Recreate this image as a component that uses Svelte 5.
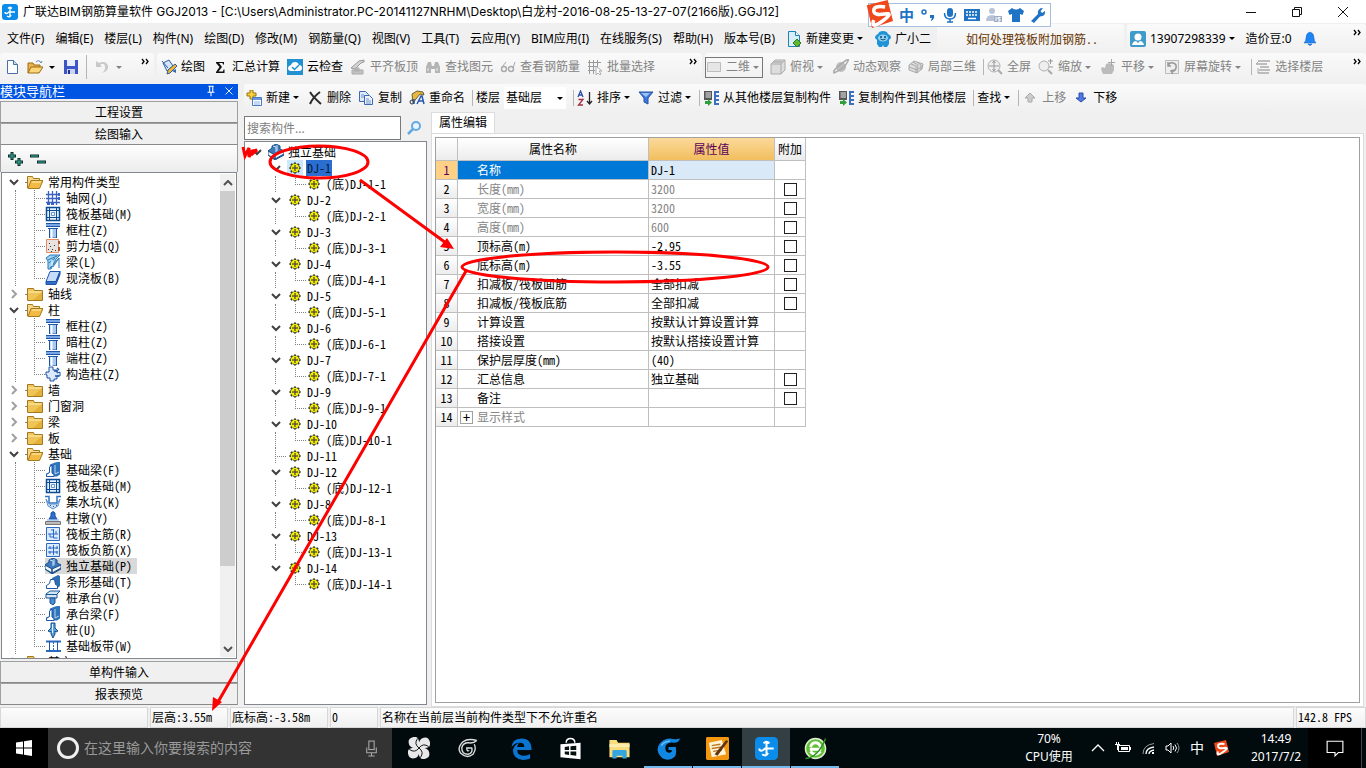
<script lang="ts">
type Item = { icon?: string; text?: string; off?: boolean; arrow?: boolean; sep?: boolean };
type Node = { text: string; open?: boolean; children?: [string, string][] };

const blue = "#1c54a8";
const col = `<path d="M1 1h14v3H1z" fill="#7ba7e6"/><path d="M1 1.500h14M1 4.500h14M3 6.500h10" stroke="${blue}"/><path d="M4.500 6.500h7V16h-7z" fill="#a9c9f5" stroke="${blue}"/><path d="M6.500 7v9" stroke="#fff" stroke-width="2"/>`;
const beam = `<path d="M1 14.500v-3l3-1 1-8 5-2 5-1v13l-3 2H1z" fill="#2f74ba"/><path d="M1.500 14.500v-2l3-2V5L7 3v8l2 1.500v2z" fill="#fff" stroke="${blue}"/><path d="M10 3v9l4-2" stroke="#b7d5f3" fill="none"/>`;
const copyTo = `<path d="M1 1h8v9H1z" fill="#555"/><path d="M2.500 3H8M2.500 5H8M2.500 7H8" stroke="#eee"/><path d="M2 11h3v-2l4 3.500L5 16v-2H2z" fill="#2f9e3c"/><path d="M11 1h5v2h-3v2h3v2h-3v2h3v2h-3v2h3v2h-5z" fill="#3c6fc0"/>`;

const icons: Record<string, string> = {
  app: `<rect width="16" height="16" rx="3" fill="#0b8ce9"/><path d="M8 3v9M3 8c0 2 2 2 4 0h6M6 4.500Q8 2 10 4.500M5 12q3 2 4-1" fill="none" stroke="#fff" stroke-width="1.400"/>`,
  new: `<path d="M3.500 1.500h6l4 4v9h-10z" fill="#fdfeff" stroke="#4a6ea5"/><path d="M9.500 1.500v4h4" fill="#c5d9f1" stroke="#4a6ea5"/>`,
  open: `<path d="M1 14V4h5l1 2h6v3" fill="#e9b44b" stroke="#9c6b14"/><path d="M1 14l3-6h12l-4 6z" fill="#fbd678" stroke="#9c6b14"/><path d="M9 3q3-3 5 1l1-2" fill="none" stroke="#5b82b8"/>`,
  save: `<path d="M1 1h14v14H1z" fill="#3d56c5"/><path d="M4 1h8v6H4z" fill="#e8eefc"/><path d="M4 10h8v5H4z" fill="#ccd5ef"/><path d="M5 11h2v4H5z" fill="#22348f"/>`,
  undo: `<path d="M2 2v6h6L6 6q4-3 5 1t-3 7q7-2 6-7-2-6-9-3z" fill="#c8c8c8"/>`,
  paint: `<path d="M2 4l6-3 4 6-6 5z" fill="#d5e4f6" stroke="#2d5f9e"/><path d="M1 2l6 7" stroke="#2d5f9e"/><path d="M6 15l1-4 7-6 2 2-7 7z" fill="#f3b62f" stroke="#31609c"/><path d="M11 12l4-2v4z" fill="#346bb0"/>`,
  sum: `<path d="M4 3h8v2.500h-1L10.500 4H7l3 4-3.500 4.500H11l.5-2h1V14H4v-1l3.500-5L4 4z" fill="#111"/>`,
  cloud: `<path d="M0 0h16v16H0z" fill="#2291d1"/><path d="M4 12q-3 0-3-3 0-2 3-3 1-3 4-3t4 3q3 0 3 3t-3 3z" fill="#fff"/><path d="M5 8l2.500 2.500L12 6" fill="none" stroke="#2291d1" stroke-width="1.500"/>`,
  align: `<path d="M1 9l8-7 5-1v2l-3 1-6 6z" fill="#d4d4d4" stroke="#999"/><path d="M2 11h11v4H2zM5 9h4v3H5z" fill="#c2c2c2" stroke="#aaa"/>`,
  find: `<path d="M1 14V8l2-5h3l1 4h2l1-4h3l2 5v6h-5v-4H6v4z" fill="#b4b4b4"/><path d="M3 9v3M12 9v3" stroke="#eee"/>`,
  glasses: `<circle cx="4" cy="10" r="2.500" fill="none" stroke="#aaa" stroke-width="1.500"/><circle cx="11" cy="10" r="2.500" fill="none" stroke="#aaa" stroke-width="1.500"/><path d="M2 8l4-5M13 9l2-6" fill="none" stroke="#aaa"/>`,
  batch: `<path d="M2.500 1v14M6.500 1v14M10.500 1v7M1 3.500h13M1 7.500h9M1 11.500h7" stroke="#999"/><path d="M9 7v9l2-2 2 2 1-1-2-3h3z" fill="#fff" stroke="#aaa"/>`,
  flat: `<path d="M1.500 3.500h13v9h-13z" fill="#e6e6e6" stroke="#bdbdbd"/>`,
  cube: `<path d="M1 5l4-4h10v10l-4 4H1z" fill="#ddd" stroke="#aaa"/><path d="M1 5h10v10M11 5l4-4" fill="none" stroke="#aaa"/><path d="M4 2h9l-2 2H2z" fill="#bbb"/>`,
  orbit: `<circle cx="8" cy="8" r="5" fill="#bdbdbd"/><path d="M1 14Q-1 12 8 5T15 2t-4 6-10 6" fill="none" stroke="#aaa" stroke-width="1.500"/>`,
  part3d: `<path d="M1 6l5-4 9 3-1 5-5 4-8-3z" fill="#ddd" stroke="#aaa"/><path d="M1 8l8 3 6-4M5 3l5 3-1 8M3 5l5 2v7M9 3l4 3v5" fill="none" stroke="#aaa"/>`,
  full: `<circle cx="7" cy="7" r="6" fill="#eee" stroke="#b0b0b0"/><path d="M7 2v10M2 7h10M5.500 4L7 2l1.500 2M5.500 10L7 12l1.500-2" fill="none" stroke="#999"/><path d="M11 11l4 4" stroke="#aaa" stroke-width="2"/>`,
  zoom: `<circle cx="6" cy="7" r="5" fill="#eee" stroke="#b0b0b0"/><path d="M10 11l4 4" stroke="#aaa" stroke-width="2"/><path d="M10 2h5M12.500 0v5M11 8h4" stroke="#999"/>`,
  pan: `<path d="M2 15q-3-5-1-7l3 1 1-4q4-2 8 1v5l-2 4z" fill="#bbb"/><path d="M10.500 0v7M7 3.500h7" stroke="#a5a5a5"/>`,
  rotate: `<path d="M1.500 1.500h13v13h-13z" fill="#eee" stroke="#bbb"/><path d="M4 7q1-4 5-3t3 5-5 3M4 3v4h3M9 15l-2-3 3-1" fill="none" stroke="#999" stroke-width="1.500"/>`,
  floors: `<path d="M3 2h12M1 5h11M5 8h9M4 11h11M3 14h11" stroke="#aaa" stroke-width="1.500"/><path d="M1 5l3-3M3 9v5" stroke="#aaa"/>`,
  create: `<path d="M4 0h3v3h3v3H7v3H4V6H1V3h3z" fill="#f7d33c" stroke="#967211"/><path d="M6.500 7.500h9v8h-9z" fill="#fff" stroke="#4c78be"/><path d="M7 8h8v2H7z" fill="#6a98df"/><path d="M8 12h6M8 14h6" stroke="#8db0e3"/>`,
  del: `<path d="M3 2q3 5 11 12M13 2Q6 7 3 14" fill="none" stroke="#2b2b2b" stroke-width="2"/>`,
  copy: `<path d="M1.500 1.500h6l3 3v7h-9z" fill="#dfeafb" stroke="#3f68b4"/><path d="M6.500 5.500h5l3 3v6h-8z" fill="#eef4ff" stroke="#3f68b4"/><path d="M3 5h3M3 7h3M8 9h3M8 11h5M8 13h5" stroke="#6d93d0"/>`,
  rename: `<path d="M3 4l5-3 6 1 1 3-4-1-4 5-3 4z" fill="#e6b842" stroke="#6d6332"/><circle cx="3" cy="12" r="2" fill="none" stroke="#333"/><path d="M5 9v5M8 14l4-8h1l2 8M9 11h5" fill="none" stroke="#2458b0" stroke-width="1.500"/>`,
  sort: `<path d="M1 7l2.500-6L6 7M2 5h3" fill="none" stroke="#2d4ea5" stroke-width="1.300"/><path d="M1.500 9.500H6L1.500 15H6" fill="none" stroke="#a52d3e" stroke-width="1.300"/><path d="M12.500 2v11M10 11l2.500 3 2.500-3" fill="none" stroke="#222" stroke-width="1.300"/>`,
  filter: `<path d="M1 2h14L10 8v6l-4-2V8z" fill="#3e78da" stroke="#2452a5"/><path d="M3 3h9L8 7z" fill="#9cc1f7"/>`,
  copyfrom: copyTo,
  copyto: copyTo,
  up: `<path d="M8 3l5 5h-3v4H6V8H3z" fill="#ccc" stroke="#aaa"/>`,
  down: `<path d="M8 12L3 8h3V3h4v5h3z" fill="#4c7ae6" stroke="#2c4ba5"/>`,
  change: `<path d="M2.500.5h7l4 4v11h-11z" fill="#d8eefb" stroke="#2181b3"/><path d="M9.500.5v4h4" fill="#fff" stroke="#2181b3"/><path d="M11 8l4 4-4 4-4-4z" fill="#5fb830" stroke="#2d7c18"/>`,
  mascot: `<path d="M0 7q0-3 3-4 1-3 5-3t5 3q3 1 3 4l-2 2v4l-2 3H9l-1-2-1 2H4l-2-3V9z" fill="#2093d6"/><ellipse cx="8" cy="7" rx="5" ry="3.500" fill="#8fd4f5"/><circle cx="6" cy="6" r="1" fill="#124876"/><circle cx="10" cy="6" r="1" fill="#124876"/><path d="M5.500 8q2.500 2 5 0" fill="none" stroke="#124876"/>`,
  user: `<rect width="16" height="16" rx="2" fill="#3f9bcb"/><circle cx="8" cy="6" r="3.500" fill="#fff"/><path d="M2 14q1-4 4-4l2 2 2-2q3 0 4 4z" fill="#fff"/>`,
  bell: `<path d="M8 1q-4 1-4 6 0 3-2 5h12q-2-2-2-5 0-5-4-6zM6 13q2 3 4 0z" fill="#1f85f5" stroke="#1965bf" stroke-width=".5"/>`,
  search: `<circle cx="10" cy="6" r="4" fill="#e9f5ff" stroke="#66a9e0" stroke-width="2"/><path d="M7 9l-5 5" stroke="#66a9e0" stroke-width="2.500"/>`,
  folder: `<path d="M.5 14.500v-12h6l1 2h8v10z" fill="#f0c557" stroke="#a47a1e"/><path d="M1 6h14" stroke="#fff0b4"/><path d="M6 14l9-8v8z" fill="#e3b03a"/>`,
  folderopen: `<path d="M.5 14V2.500h5l1 2h6V7" fill="#f6d98c" stroke="#a47a1e"/><path d="M1 14.500l3-8h12l-3.500 8z" fill="#f3bb45" stroke="#a47a1e"/><path d="M5 8h9" stroke="#fff0b4"/>`,
  grid: `<path d="M3.500 1v14M7.500 1v14M11.500 1v14M1 4.500h14M1 8.500h14M1 12.500h14" stroke="#3b62c0" stroke-width="1.300"/><path d="M13 3h2v3h-2zM13 7h2v3h-2zM2 13h3v2H2zM6 13h3v2H6z" fill="#3b62c0"/>`,
  raft: `<path d="M1.500 1.500h13v13h-13z" fill="#e8f2ff" stroke="#0d4b91" stroke-width="1.500"/><path d="M4.500 1v14M11.500 1v14M1 4.500h14M1 11.500h14" stroke="#0d4b91"/><path d="M6.500 6.500h3v3h-3z" fill="#fff" stroke="#5c93d4"/>`,
  col,
  wall: `<path d="M1.500 1.500h12v13h-12z" fill="#e8e3df" stroke="#e88b60"/><path d="M3 11h1v1H3zM5 8h1v1H5zM7 11h1v1H7zM9 7h1v1H9zM10 12h1v1h-1zM4 5h1v1H4zM6 13h1v1H6z" fill="#333"/><path d="M14 3v3M14 9v4" stroke="#b65826" stroke-width="2"/>`,
  beamf: `<path d="M1 4l4-3h10l-4 4-5 10H3V7z" fill="#9fd0f0" stroke="#2779b8"/><path d="M3 6l9-4M5 14l9-10v10M8 13l6-9M4 9l6-5" fill="none" stroke="#2779b8"/><path d="M7 6v6" stroke="#fff"/>`,
  slab: `<path d="M5 1.500h10l-4 10H1z" fill="#c5dcfa" stroke="${blue}"/><path d="M1 11.500h10l4-10v3l-4 10H1z" fill="#346cc8" stroke="${blue}"/>`,
  ccol: `<path d="M4 1h4v3h4v3l3-1v4h-3v3H9v2H5v-3H2V9H1V6h3z" fill="#dce9fb" stroke="${blue}"/><path d="M9 5h4M10 10h4M12 2l2 2" stroke="${blue}" stroke-width="1.500"/>`,
  beam,
  pit: `<path d="M0 2.500h4V9h8V2.500h4" fill="none" stroke="#3175c5" stroke-width="1.500"/><path d="M1 5l2 7 5 3 5-3 2-7-3 5H4z" fill="#cfe2f7" stroke="#5991d2"/><path d="M5 11h1v1H5zM8 12h1v1H8zM11 11h1v1h-1z" fill="#235a9e"/>`,
  pier: `<path d="M6 3q2-3 4 0v3l2 3H4l2-3z" fill="#2f6fcb" stroke="${blue}"/><path d="M.5 11.500h15v3H.5z" fill="#bbb" stroke="#777"/><path d="M2 10h12" stroke="#75a5e0"/>`,
  rebar: `<path d="M1.500 1.500h13v13h-13z" fill="#dceafd" stroke="#2b69c3"/><path d="M3 8h10M8.500 3v9h4M5 8v3h3M6 4h2M11 5v3" fill="none" stroke="#2b69c3"/>`,
  rebarx: `<path d="M1.500 1.500h13v13h-13z" fill="#dceafd" stroke="#2b69c3"/><path d="M3 6h10M3 10h10M8.500 3v10M5 4v3M12 4v3M5 9v3M12 9v3" fill="none" stroke="#2b69c3"/>`,
  iso: `<path d="M0 7l4-3V2l4-2 4 2v3l4 2v4l-9 5-7-5z" fill="#3b78bc" stroke="#1b4d84"/><path d="M0 7l7 4v4l-7-4zM7 11l9-4v3l-9 5z" fill="#eef6ff" stroke="#1b4d84"/><path d="M5 2l3 1v5M9 1v6" fill="none" stroke="#cfe4fa"/>`,
  strip: `<path d="M7 4l6-3 2 1v10l-4 3z" fill="#2f6eb1"/><path d="M1.500 14.500v-3l3-2 1-4h4l1 5 2 1v3z" fill="#fff" stroke="${blue}"/>`,
  cap: `<path d="M1 4l4-3h10l-3 3v4H1z" fill="#d5e6fb" stroke="#1b5694"/><path d="M1 4.500h11M5 8h5v5l-2 2-3-2z" fill="#498bd3" stroke="#1b5694"/>`,
  pile: `<path d="M6 1h4v5l3 3-2 1-1-1v3l-2 4-2-4V9l-1 1-2-1 3-3z" fill="#5aa0e0" stroke="#164d87"/><path d="M7.500 2v9" stroke="#e4f2ff"/>`,
  band: `<path d="M1 3.500h15M1 13h15" stroke="#2b69c3" stroke-width="2"/><path d="M4.500 3v10M12.500 3v10" stroke="${blue}"/><path d="M8.500 4v8" stroke="#2b69c3" stroke-dasharray="2 1"/>`,
  gear: `<path d="M8 2.500v11M2.500 8h11M4 4l8 8M12 4l-8 8" stroke="#222" stroke-width="2"/><circle cx="8" cy="8" r="4.500" fill="#f4ee00" stroke="#333" stroke-dasharray="1.500 1"/><path d="M8 5v1M8 10v1M5 8h1M10 8h1" stroke="#222"/><path d="M7 7h2v2H7z" fill="#fff" stroke="#222"/>`,
  plusplus: `<path d="M5 1v8M1 5h8M12 7v8M8 11h8" stroke="#0a2f2b" stroke-width="3"/><path d="M5 2v6M2 5h6M12 8v6M9 11h6" stroke="#35b4a0"/>`,
  minusminus: `<path d="M0 5h9M7 11h9" stroke="#0a2f2b" stroke-width="3"/><path d="M1 5h7M8 11h7" stroke="#35b4a0"/>`,
  sogou: `<path d="M1 3l12-3 3 12-12 4z" fill="#f0481a"/><path d="M11.500 4Q5 3 5 6t6 2-1 4-5-.5" fill="none" stroke="#fff" stroke-width="2"/>`,
  comma: `<circle cx="4" cy="5" r="2" fill="none" stroke="#1e73c5" stroke-width="1.500"/><path d="M10 8h4q1 4-3 6v-1l1-2h-2z" fill="#1e73c5"/>`,
  mic: `<rect x="5" y="1" width="6" height="9" rx="3" fill="#1e73c5"/><path d="M2.500 6q0 6 5.500 6t5.500-6M8 12v3M5 15h6" fill="none" stroke="#1e73c5" stroke-width="1.500"/>`,
  keys: `<path d="M0 2h16v12H0z" fill="#1e73c5"/><path d="M2 5h12M2 8h12" stroke="#fff" stroke-width="1.500" stroke-dasharray="2 1"/><path d="M4 11.500h8" stroke="#fff" stroke-width="1.500"/>`,
  person: `<circle cx="6" cy="4" r="3" fill="#b7c3d6"/><path d="M0 14q0-6 6-6t5 6z" fill="#b7c3d6"/><path d="M8 9h8v6H8z" fill="#9dadc5"/><path d="M10 10v4M14.500 10.500H12v1.500h2v2h-2" fill="none" stroke="#fff"/>`,
  shirt: `<path d="M0 4l4-3q4 3 8 0l4 3-1.500 4L12 7v8H4V7L1.500 8z" fill="#1e73c5"/>`,
  wrench: `<path d="M1 14l7-7q-1-4 3-6l2 .5L10.500 4 12 6l3-2q1 5-5 5.500L4 16z" fill="#1e73c5"/>`,
  fan: `<g fill="#e8e8e8"><path d="M8 8Q3 9 1 6-1 1 4 0t4 8z"/><path d="M8 8Q7 3 10 1q5-2 6 3T8 8z"/><path d="M8 8q5-1 7 2 2 5-3 6T8 8z"/><path d="M8 8q1 5-2 7-5 2-6-3t8-4z"/><circle cx="8" cy="8" r="4"/></g><path d="M8 8Q4 5 7 1M8 8q3-4 7-1M8 8q4 3 1 7M8 8q-3 4-7 1" fill="none" stroke="#0a1215" stroke-width=".7"/>`,
  swirl: `<path d="M15 2q-2 2-5 2-6-1-7 4 0 5 5 5 4-1 3-5H7q0 3 2 2M15 2q-7-2-11 1-5 5-2 9 5 5 10 1 3-4 1-8" fill="none" stroke="#ddd" stroke-width="1.100"/>`,
  edge: `<path d="M1 8Q1 1 8 1t7 8H5q0 4 5 4 2 0 4-1v3q-2 1-5 1-7-1-7-7 1-4 5-5-2 1-2 3h5q0-3-3-3-4 0-6 3z" fill="#0b76d1"/>`,
  store: `<path d="M1 5l14-1v11.500L1 14z" fill="#fff"/><path d="M5 4q0-3 3-3t3 3" fill="none" stroke="#fff"/><path d="M4 7l3-.5V9H4zM8 6.500l4-.5v3H8zM4 10h3v2.500L4 12zM8 10h4v3l-4-.5z" fill="#05100f"/>`,
  explorer: `<path d="M1 2h5l1 2h8v10H1z" fill="#f9dc7c"/><path d="M1 5h14v2H1z" fill="#fdeeb0"/><path d="M3 15v-5q0-1 1-1h8q1 0 1 1v5h-3v-2H6v2z" fill="#34a5de"/>`,
  gblue: `<path d="M16 1q-1 3-4 3-4-1-6 2-1 5 3 5 2-1 1-2H8V7h5q1 5-1 7-4 3-8 1-5-4-3-9 3-5 8-5 4 1 7 0z" fill="#1287e2"/><path d="M3 6q2-3 6-3" stroke="#64bef6" fill="none"/>`,
  note: `<rect width="16" height="16" rx="1" fill="#f39711"/><path d="M2 4l9-2 3 10-10 2z" fill="#fff5d8"/><path d="M4 6l6-1M4 8l7-1M5 10l6-1" stroke="#b97724"/><path d="M6 12L14 2l1.500 1L8 13z" fill="#633410"/>`,
  browser: `<circle cx="8" cy="8" r="7" fill="#61bf34" stroke="#dff2d2"/><path d="M4 8.500h8M4.500 7q1-3 3.500-3t3.500 3M4.500 10q3 4 7 0" fill="none" stroke="#fff" stroke-width="2"/><path d="M1 15Q10 14 15 1" fill="none" stroke="#2d8d22"/>`,
  win: `<path d="M0 2.500L7 1.500V7.500H0zM8 1.300L16 0v7.500H8zM0 8.500h7v6l-7-1zM8 8.500h8V16l-8-1.300z" fill="#fff"/>`,
  micline: `<rect x="5.500" y="1" width="5" height="8" fill="none" stroke="#aaa"/><path d="M3.500 7v5h9V7M8 12v3M5 15h6" fill="none" stroke="#aaa"/>`,
  caret: `<path d="M2 11l6-6 6 6" fill="none" stroke="#fff" stroke-width="1.300"/>`,
  battery: `<path d="M3.500 5.500h11v6h-11zM15.500 7v3" fill="none" stroke="#fff"/><path d="M6 7h7v3H6z" fill="#fff"/><path d="M0 4.500h5M1.500 2v2M3.500 2v2M2.500 5v5" stroke="#fff"/>`,
  wifi: `<path d="M3 14Q3 5 14 3.500" fill="none" stroke="#999"/><path d="M6 14q0-6 8-7M9 14q0-3 5-4" fill="none" stroke="#fff" stroke-width="1.300"/><path d="M12 12h2v2h-2z" fill="#fff"/>`,
  volume: `<path d="M1 6h2l3-3v10l-3-3H1z" fill="none" stroke="#fff"/><path d="M8 6q1.500 2 0 4M10 4.500q3 3.500 0 7" fill="none" stroke="#fff"/><path d="M12 3q4 5 0 10" fill="none" stroke="#999"/>`,
  notice: `<path d="M1 2h14v10h-4l-3 3v-3H1z" fill="none" stroke="#fff"/>`,
  min: `<path d="M3 8.500h10" stroke="#111"/>`,
  restore: `<path d="M3.500 5.500h7v7h-7zM5.500 5.500v-2h7v7h-2" fill="none" stroke="#111"/>`,
  close: `<path d="M3 3l10 10M13 3L3 13" stroke="#111"/>`,
  pin: `<path d="M5 2.500h6M6.500 3v6M10 3v6M4 9.500h8M8 10v4" fill="none" stroke="#fff" stroke-width="1.200"/>`,
  closew: `<path d="M4 4l8 8M12 4l-8 8" stroke="#fff"/>`,
};

const menus = ["文件(F)", "编辑(E)", "楼层(L)", "构件(N)", "绘图(D)", "修改(M)", "钢筋量(Q)", "视图(V)", "工具(T)", "云应用(Y)", "BIM应用(I)", "在线服务(S)", "帮助(H)", "版本号(B)"];

const drawTools: Item[] = [
  { icon: "paint", text: "绘图" },
  { icon: "sum", text: "汇总计算" },
  { icon: "cloud", text: "云检查" },
  { icon: "align", text: "平齐板顶", off: true },
  { icon: "find", text: "查找图元", off: true },
  { icon: "glasses", text: "查看钢筋量", off: true },
  { icon: "batch", text: "批量选择", off: true },
];

const viewTools: Item[] = [
  { icon: "cube", text: "俯视", off: true, arrow: true },
  { icon: "orbit", text: "动态观察", off: true },
  { icon: "part3d", text: "局部三维", off: true },
  { sep: true },
  { icon: "full", text: "全屏", off: true },
  { icon: "zoom", text: "缩放", off: true, arrow: true },
  { icon: "pan", text: "平移", off: true, arrow: true },
  { icon: "rotate", text: "屏幕旋转", off: true, arrow: true },
  { sep: true },
  { icon: "floors", text: "选择楼层", off: true },
];

const editTools: Item[] = [
  { icon: "create", text: "新建", arrow: true },
  { icon: "del", text: "删除" },
  { icon: "copy", text: "复制" },
  { icon: "rename", text: "重命名" },
  { sep: true },
];

const sortTools: Item[] = [
  { sep: true },
  { icon: "sort", text: "排序", arrow: true },
  { icon: "filter", text: "过滤", arrow: true },
  { sep: true },
  { icon: "copyfrom", text: "从其他楼层复制构件" },
  { icon: "copyto", text: "复制构件到其他楼层" },
  { sep: true },
  { text: "查找", arrow: true },
  { sep: true },
  { icon: "up", text: "上移", off: true },
  { icon: "down", text: "下移" },
];

const nav: Node[] = [
  { text: "常用构件类型", open: true, children: [["grid", "轴网(J)"], ["raft", "筏板基础(M)"], ["col", "框柱(Z)"], ["wall", "剪力墙(Q)"], ["beamf", "梁(L)"], ["slab", "现浇板(B)"]] },
  { text: "轴线" },
  { text: "柱", open: true, children: [["col", "框柱(Z)"], ["col", "暗柱(Z)"], ["col", "端柱(Z)"], ["ccol", "构造柱(Z)"]] },
  { text: "墙" },
  { text: "门窗洞" },
  { text: "梁" },
  { text: "板" },
  { text: "基础", open: true, children: [["beam", "基础梁(F)"], ["raft", "筏板基础(M)"], ["pit", "集水坑(K)"], ["pier", "柱墩(Y)"], ["rebar", "筏板主筋(R)"], ["rebarx", "筏板负筋(X)"], ["iso", "独立基础(P)"], ["strip", "条形基础(T)"], ["cap", "桩承台(V)"], ["beam", "承台梁(F)"], ["pile", "桩(U)"], ["band", "基础板带(W)"]] },
  { text: "其它" },
];

const parts = [1, 2, 3, 4, 5, 6, 7, 9, 10, 11, 12, 8, 13, 14];

// name, value, has the extra tick box, read-only
const props: [string, string, boolean, boolean][] = [
  ["名称", "DJ-1", false, false],
  ["长度(mm)", "3200", true, true],
  ["宽度(mm)", "3200", true, true],
  ["高度(mm)", "600", true, true],
  ["顶标高(m)", "-2.95", true, false],
  ["底标高(m)", "-3.55", true, false],
  ["扣减板/筏板面筋", "全部扣减", true, false],
  ["扣减板/筏板底筋", "全部扣减", true, false],
  ["计算设置", "按默认计算设置计算", false, false],
  ["搭接设置", "按默认搭接设置计算", false, false],
  ["保护层厚度(mm)", "(40)", false, false],
  ["汇总信息", "独立基础", true, false],
  ["备注", "", true, false],
  ["显示样式", "", false, true],
];

const tasks = [
  { icon: "edge", name: "Edge" },
  { icon: "store", name: "Store" },
  { icon: "explorer", name: "Explorer" },
  { icon: "gblue", name: "Browser", run: true },
  { icon: "note", name: "Notes", run: true },
  { icon: "app", name: "GGJ2013", run: true, active: true },
  { icon: "browser", name: "Web", run: true },
];
</script>

{#snippet icon(name: string, size = 16)}
  <svg class="icon" width={size} height={size} viewBox="0 0 16 16" aria-hidden="true">{@html icons[name]}</svg>
{/snippet}

{#snippet arrow()}
  <svg class="arrow" width="9" height="5" viewBox="0 0 9 5" aria-hidden="true"><path d="M2 1h6L5 4z" fill="currentColor" /></svg>
{/snippet}

{#snippet chevron(open: boolean)}
  <svg class="chevron" width="10" height="10" viewBox="0 0 10 10" aria-hidden="true">
    <path d={open ? "M1 3l4 4 4-4" : "M3 1l4 4-4 4"} fill="none" stroke={open ? "#404040" : "#a0a0a0"} stroke-width="2" />
  </svg>
{/snippet}

{#snippet elbow(last: boolean, width = 11)}
  <svg class="icon" {width} height="16" viewBox="0 0 {width} 16" aria-hidden="true">
    <path d={last ? "M.5 0v9" : "M.5 0v16"} stroke="#808080" stroke-dasharray="1 1" />
    <path d="M0 8.500h{width}" stroke="#808080" stroke-dasharray="1 1" />
  </svg>
{/snippet}

{#snippet more()}
  <button class="more" aria-label="更多">
    <svg width="8" height="7" viewBox="0 0 8 7"><path d="M1 1l2 2.500L1 6M5 1l2 2.500L5 6" fill="none" stroke="#000" stroke-width="1.300" /></svg>
  </button>
{/snippet}

{#snippet tools(list: Item[])}
  {#each list as item}
    {#if item.sep}
      <i class="sep"></i>
    {:else}
      <button class="tool" class:off={item.off}>
        {#if item.icon}{@render icon(item.icon)}{/if}
        <span>{item.text}</span>
        {#if item.arrow}{@render arrow()}{/if}
      </button>
    {/if}
  {/each}
{/snippet}

<div class="screen">
  <header class="titlebar">
    {@render icon("app")}
    <h1>广联达BIM钢筋算量软件 GGJ2013 - [C:\Users\Administrator.PC-20141127NRHM\Desktop\白龙村-2016-08-25-13-27-07(2166版).GGJ12]</h1>
    <div class="window-buttons">
      <button aria-label="最小化">{@render icon("min")}</button>
      <button aria-label="还原">{@render icon("restore")}</button>
      <button aria-label="关闭">{@render icon("close")}</button>
    </div>
  </header>

  <div class="ime">
    <div class="ime-logo">{@render icon("sogou", 28)}</div>
    <b>中</b>
    {#each ["comma", "mic", "keys", "person", "shirt", "wrench"] as name}{@render icon(name)}{/each}
  </div>

  <div class="row menubar">
    <nav>
      {#each menus as menu}<button>{menu}</button>{/each}
      <button class="tool">{@render icon("change")}<span>新建变更</span>{@render arrow()}</button>
      <button class="tool">{@render icon("mascot")}<span>广小二</span></button>
    </nav>
    <div class="band news"><a class="song" href="#news">如何处理筏板附加钢筋..</a></div>
    <div class="band account">
      <button class="tool">{@render icon("user")}<span>13907298339</span>{@render arrow()}</button>
      <span>造价豆:0</span>
      {@render icon("bell")}
      {@render more()}
    </div>
  </div>

  <div class="row toolbar">
    <div class="band files">
      <button aria-label="新建">{@render icon("new")}</button>
      <button class="tool" aria-label="打开">{@render icon("open")}{@render arrow()}</button>
      <button aria-label="保存">{@render icon("save")}</button>
      <i class="sep"></i>
      <button class="tool off" aria-label="撤销">{@render icon("undo")}{@render arrow()}</button>
      {@render more()}
    </div>
    <div class="band draw">
      {@render tools(drawTools)}
      {@render more()}
    </div>
    <div class="band view">
      <button class="tool off mode">{@render icon("flat")}<span>二维</span>{@render arrow()}</button>
      {@render tools(viewTools)}
      {@render more()}
    </div>
  </div>

  <div class="work">
    <aside class="nav song">
      <h2>模块导航栏 <span>{@render icon("pin", 14)}{@render icon("closew", 14)}</span></h2>
      <button class="page">工程设置</button>
      <button class="page">绘图输入</button>
      <div class="fold">
        <button aria-label="全部展开">{@render icon("plusplus")}</button>
        <button aria-label="全部折叠">{@render icon("minusminus")}</button>
      </div>
      <div class="tree">
        <ul>
          {#each nav as group}
            <li>
              <div class="node">
                <span class="toggle">{@render chevron(!!group.open)}</span>
                <i class="stub"></i>
                {@render icon(group.open ? "folderopen" : "folder")}
                <span class="label">{group.text}</span>
              </div>
              {#if group.children}
                <ul class="leaves">
                  {#each group.children as [name, text], i}
                    <li class="node">
                      {@render elbow(i === group.children.length - 1)}
                      <span class="leaf" class:picked={text === "独立基础(P)"}>
                        {@render icon(name)}
                        <span class="label">{text}</span>
                      </span>
                    </li>
                  {/each}
                </ul>
              {/if}
            </li>
          {/each}
        </ul>
        <div class="scrollbar">
          <span><svg width="10" height="6" viewBox="0 0 10 6"><path d="M1 5l4-4 4 4" fill="none" stroke="#505050" stroke-width="2" /></svg></span>
          <i></i>
          <span><svg width="10" height="6" viewBox="0 0 10 6"><path d="M1 1l4 4 4-4" fill="none" stroke="#505050" stroke-width="2" /></svg></span>
        </div>
      </div>
      <button class="page">单构件输入</button>
      <button class="page">报表预览</button>
    </aside>

    <main>
      <div class="band edit">
        {@render tools(editTools)}
        <label for="floor">楼层</label>
        <div class="combo">
          <select id="floor"><option>基础层</option></select>
          {@render arrow()}
        </div>
        {@render tools(sortTools)}
      </div>
      <div class="panes">
        <section class="parts">
          <div class="search">
            <input type="text" placeholder="搜索构件..." aria-label="搜索构件" />
            <button aria-label="搜索">{@render icon("search")}</button>
          </div>
          <ul class="part-tree song">
            <li class="node root">
              <span class="toggle">{@render chevron(true)}</span>
              {@render icon("iso")}
              <span class="label">独立基础</span>
            </li>
            {#each parts as n}
              <li>
                <div class="node part">
                  {#if n === 11}
                    <span class="twig">{@render elbow(false)}</span>
                  {:else}
                    <span class="toggle">{@render chevron(true)}</span>
                  {/if}
                  <span class:lit={n === 1}>{@render icon("gear")}</span>
                  <span class="name" class:current={n === 1}>DJ-{n}</span>
                </div>
                {#if n !== 11}
                  <div class="node child" class:last={n === 14}>
                    {@render elbow(true)}
                    {@render icon("gear")}
                    <span class="name">(底)DJ-{n}-1</span>
                  </div>
                {/if}
              </li>
            {/each}
          </ul>
        </section>

        <section class="props">
          <button class="tab">属性编辑</button>
          <div class="sheet">
            <div class="sheet-inner">
              <table class="song">
                <thead>
                  <tr><th class="num"></th><th class="key">属性名称</th><th class="val">属性值</th><th class="add">附加</th></tr>
                </thead>
                <tbody>
                  {#each props as [name, value, extra, dim], i}
                    <tr class:chosen={i === 0} class:dim>
                      <th class="num">{i + 1}</th>
                      <td class="key">
                        <div>
                          <span class="plus">{#if i === 13}<button aria-label="展开">+</button>{/if}</span>
                          {name}
                        </div>
                      </td>
                      <td class="val">{value}</td>
                      <td class="add">{#if extra}<input type="checkbox" aria-label="附加 {name}" />{/if}</td>
                    </tr>
                  {/each}
                </tbody>
              </table>
            </div>
          </div>
        </section>
      </div>
    </main>
  </div>

  <footer class="status song">
    <span class="w-blank"></span>
    <span class="w-height">层高:3.55m</span>
    <span class="w-base">底标高:-3.58m</span>
    <span class="w-count">0</span>
    <span class="w-hint">名称在当前层当前构件类型下不允许重名</span>
    <span class="w-fps">142.8 FPS</span>
  </footer>

  <div class="taskbar">
    <button class="start" aria-label="开始">{@render icon("win")}</button>
    <div class="cortana">
      <i></i>
      <input type="text" placeholder="在这里输入你要搜索的内容" aria-label="搜索" />
      {@render icon("micline", 17)}
    </div>
    <div class="pinned">
      <button aria-label="Fan">{@render icon("fan", 22)}</button>
      <button aria-label="Swirl">{@render icon("swirl", 20)}</button>
    </div>
    <div class="tasks">
      {#each tasks as task}
        <button class:run={task.run} class:active={task.active} aria-label={task.name}>{@render icon(task.icon, 23)}</button>
      {/each}
    </div>
    <div class="cpu"><span>70%</span><span>CPU使用</span></div>
    <div class="tray">
      {#each ["caret", "battery", "wifi", "volume"] as name}{@render icon(name)}{/each}
      <span class="lang">中</span>
      {@render icon("sogou")}
    </div>
    <div class="clock"><span>14:49</span><span>2017/7/2</span></div>
    <button class="notice" aria-label="通知">{@render icon("notice", 18)}</button>
  </div>

  <svg class="marks" width="1366" height="768" viewBox="0 0 1366 768" aria-hidden="true">
    <g fill="none" stroke="#fe0000" stroke-width="3">
      <ellipse cx="319" cy="162" rx="49" ry="16" />
      <ellipse cx="615" cy="267" rx="153" ry="15" />
      <path d="M360 180L446 243M466 271L218 702" />
      <path d="M243 147l2 9 4-8v9l3-6 5-1-6 5" />
    </g>
    <path d="M454 249l-14-2 7-9zM212 711l1-14 9 5z" fill="#fe0000" />
  </svg>
</div>

<style>
  :global(body) {
    margin: 0;
    background: #f0f0f0;
  }

  .screen {
    position: relative;
    display: flex;
    flex-direction: column;
    height: 100vh;
    overflow: hidden;
    font: 12px/16px "Noto Sans", "Noto Sans CJK SC", sans-serif;
    color: #000;
    background: #f0f0f0;
  }

  button,
  input,
  select {
    font: inherit;
    color: inherit;
    margin: 0;
    padding: 0;
    border: 0;
    background: none;
    border-radius: 0;
    white-space: nowrap;
  }

  ul {
    list-style: none;
    margin: 0;
    padding: 0;
  }

  .icon,
  .arrow,
  .chevron {
    display: block;
    flex: none;
  }

  /* half-width latin next to full-width characters */
  .song {
    font-family: "Noto Sans CJK SC", sans-serif;
    font-feature-settings: "hwid";
  }

  .titlebar {
    display: flex;
    align-items: center;
    height: 23px;
    padding-left: 2px;
    background: #fff;
  }

  h1 {
    flex: 1;
    margin: 0 0 0 5px;
    font-family: Inter, "Noto Sans CJK SC", sans-serif;
    font-size: 12px;
    font-weight: 400;
    white-space: nowrap;
  }

  .window-buttons {
    display: flex;
  }

  .window-buttons button {
    display: grid;
    place-items: center;
    width: 46px;
    height: 20px;
  }

  .ime {
    position: absolute;
    top: 3px;
    right: 315px;
    display: flex;
    align-items: center;
    gap: 6px;
    height: 22px;
    padding: 0 4px 0 30px;
    border: 1px solid #a5bfdd;
    background: #fff;
    z-index: 2;
  }

  .ime-logo {
    position: absolute;
    left: -4px;
    top: -4px;
  }

  .ime b {
    color: #1e73c5;
    font-size: 15px;
  }

  .row {
    display: flex;
    align-items: stretch;
    gap: 3px;
  }

  .menubar {
    height: 29px;
    padding-top: 1px;
  }

  .menubar nav {
    display: flex;
    align-items: center;
    gap: 11px;
    flex: 1 0 auto;
    padding-left: 7px;
  }

  .band {
    display: flex;
    align-items: center;
    gap: 7px;
    border-radius: 3px;
    background: linear-gradient(#fafafa, #f0f0f0);
    white-space: nowrap;
  }

  .news {
    width: 187px;
    box-sizing: border-box;
    padding-left: 29px;
  }

  .news a {
    color: #663300;
    text-decoration: none;
  }

  .account {
    width: 239px;
    box-sizing: border-box;
    padding-left: 3px;
    gap: 10px;
  }

  .tool {
    display: flex;
    align-items: center;
    gap: 4px;
  }

  .tool span + .arrow {
    margin-left: -3px;
  }

  .off {
    color: #838383;
  }

  .more {
    align-self: flex-start;
    margin-left: auto;
    padding: 5px 5px 0 0;
    line-height: 0;
  }

  .sep {
    width: 1px;
    height: 16px;
    margin-right: -4px;
    background: #b5b5b5;
  }

  .toolbar {
    height: 28px;
  }

  .files {
    width: 150px;
    padding-left: 4px;
  }

  .files .sep {
    height: 24px;
    margin-right: 0;
  }

  .draw {
    width: 541px;
    padding-left: 4px;
  }

  .view {
    flex: 1;
    padding-left: 0;
  }

  .view .arrow {
    margin-right: 2px;
  }

  .mode {
    height: 21px;
    border: 1px solid #777;
  }

  .work {
    flex: 1;
    display: flex;
    gap: 6px;
    min-height: 0;
    padding-top: 3px;
  }

  .nav {
    display: flex;
    flex-direction: column;
    width: 238px;
    flex: none;
    min-height: 0;
    padding-bottom: 2px;
  }

  h2 {
    display: flex;
    justify-content: space-between;
    margin: 0 0 2px;
    height: 15px;
    line-height: 14px;
    font-size: 13px;
    font-weight: 400;
    color: #fff;
    background: #0054e3;
  }

  h2 span {
    display: flex;
    gap: 4px;
    padding-right: 2px;
  }

  .page {
    flex: none;
    height: 22px;
    border: 1px solid #a0a0a0;
    border-bottom-color: #888;
    background: #f0f0f0;
  }

  .fold {
    display: flex;
    align-items: center;
    gap: 7px;
    flex: none;
    height: 27px;
    padding-left: 6px;
    background: linear-gradient(#fdfdfd, #ececec);
    border: solid #a0a0a0;
    border-width: 0 1px;
    box-sizing: border-box;
  }

  .tree {
    flex: 1;
    display: flex;
    justify-content: space-between;
    min-height: 0;
    margin: 0 1px 2px;
    padding: 1px;
    border: 1px solid #828790;
    background: #fff;
    overflow: hidden;
  }

  .node {
    display: flex;
    align-items: center;
    height: 16px;
    line-height: 16px;
    white-space: nowrap;
  }

  .toggle {
    display: flex;
    justify-content: center;
    width: 22px;
  }

  .stub {
    width: 2px;
    border-top: 1px dotted #808080;
  }

  .label {
    padding: 0 5px;
  }

  .leaves {
    margin-left: 12px;
    padding-left: 18px;
    border-left: 1px dotted #808080;
  }

  .leaf {
    display: flex;
  }

  .picked {
    background: #d9d9d9;
  }

  .scrollbar {
    display: flex;
    flex-direction: column;
    width: 15px;
    background: #f0f0f0;
  }

  .scrollbar span {
    display: grid;
    place-items: center;
    height: 17px;
  }

  .scrollbar i {
    height: 375px;
    margin-bottom: auto;
    background: #cdcdcd;
  }

  main {
    flex: 1;
    display: flex;
    flex-direction: column;
    min-width: 0;
  }

  .edit {
    height: 27px;
    padding-left: 2px;
    flex: none;
  }

  .combo {
    position: relative;
    margin-left: -3px;
  }

  .combo select {
    display: block;
    width: 62px;
    height: 22px;
    padding-left: 2px;
    appearance: none;
    background: #fff;
  }

  .combo .arrow {
    position: absolute;
    right: 2px;
    top: 9px;
    pointer-events: none;
  }

  .panes {
    flex: 1;
    display: flex;
    gap: 4px;
    min-height: 0;
  }

  .parts {
    display: flex;
    flex-direction: column;
    width: 183px;
    flex: none;
    margin: 4px 0 2px;
  }

  .search {
    display: flex;
    align-items: center;
    gap: 5px;
    height: 26px;
  }

  .search input {
    flex: 1;
    min-width: 0;
    height: 22px;
    padding: 0 2px;
    border: 1px solid #7a7a7a;
    background: #fff;
  }

  .search input::placeholder {
    color: #808080;
    opacity: 1;
  }

  .search button {
    width: 21px;
  }

  .part-tree {
    flex: 1;
    padding-top: 2px;
    border: 1px solid #828790;
    background: #fff;
  }

  .root .toggle {
    width: 23px;
  }

  .root .label {
    padding: 0 4px;
  }

  .part {
    padding-left: 20px;
  }

  .twig {
    width: 12px;
    padding-left: 10px;
  }

  .child {
    margin-left: 30px;
    padding-left: 19px;
    border-left: 1px dotted #808080;
  }

  .last {
    border-color: transparent;
  }

  .lit {
    background: #cce8ff;
  }

  .name {
    margin-left: 3px;
    padding: 0 1px;
  }

  .current {
    color: #001a3a;
    background: #2a6fd0;
  }

  .props {
    flex: 1;
    display: flex;
    flex-direction: column;
    align-items: flex-start;
    min-width: 0;
    margin: 1px 2px 0 0;
  }

  .tab {
    height: 21px;
    padding: 0 7px;
    border: 1px solid #dcdcdc;
    border-bottom: 0;
    background: #fff;
  }

  .sheet {
    flex: 1;
    align-self: stretch;
    padding: 3px;
    border: 1px solid #dcdcdc;
    background: #fff;
  }

  .sheet-inner {
    height: 100%;
    box-sizing: border-box;
    border: 1px solid #a0a0a0;
    overflow: hidden;
  }

  table {
    width: 370px;
    table-layout: fixed;
    border-collapse: separate;
    border-spacing: 0;
  }

  th,
  td {
    height: 18px;
    padding: 0;
    border: solid #bfbfbf;
    border-width: 0 1px 1px 0;
    font-weight: 400;
    line-height: 16px;
    white-space: nowrap;
  }

  thead th {
    height: 22px;
    background: linear-gradient(#fff, #ececec);
  }

  th.num {
    width: 21px;
    background: linear-gradient(#fff, #ececec);
  }

  .key {
    width: 190px;
  }

  .key div {
    display: flex;
    align-items: center;
  }

  .val {
    width: 125px;
  }

  td.val {
    padding-left: 2px;
    width: 123px;
  }

  thead .val {
    color: #5a005a;
    background: linear-gradient(#fbd99a, #f2be5e);
  }

  .add {
    width: 30px;
  }

  .plus {
    width: 17px;
    padding-left: 2px;
  }

  .plus button {
    display: grid;
    place-items: center;
    width: 13px;
    height: 13px;
    border: 1px solid #a0a0a0;
    font-size: 14px;
    line-height: 10px;
  }

  .dim td {
    color: #858585;
  }

  .dim button {
    color: #000;
  }

  .chosen th {
    color: #5a005a;
    background: #ffd187;
  }

  .chosen .key {
    color: #fff;
    background: #0078d7;
  }

  .chosen .val {
    background: #d9e9f7;
  }

  input[type="checkbox"] {
    appearance: none;
    display: block;
    width: 13px;
    height: 13px;
    margin: 0 auto;
    border: 1px solid #222;
    background: #fff;
  }

  .status {
    display: flex;
    gap: 2px;
    height: 21px;
    flex: none;
  }

  .status > span {
    box-sizing: border-box;
    padding-left: 1px;
    border: 1px solid #d7d7d7;
    background: linear-gradient(#fcfcfc, #f0f0f0);
    line-height: 18px;
    white-space: nowrap;
  }

  .w-blank {
    width: 148px;
  }

  .w-height {
    width: 78px;
  }

  .w-base {
    width: 98px;
  }

  .w-count {
    width: 48px;
  }

  .w-hint {
    flex: 1;
  }

  .w-fps {
    width: 70px;
  }

  .taskbar {
    display: flex;
    flex: none;
    height: 40px;
    color: #fff;
    background: #010b0e;
  }

  .taskbar button {
    display: grid;
    place-items: center;
    width: 48px;
    box-sizing: border-box;
  }

  .taskbar .start {
    background: #000;
  }

  .cortana {
    display: flex;
    align-items: center;
    width: 344px;
    box-sizing: border-box;
    padding: 0 12px 0 9px;
    background: #333;
  }

  .cortana i {
    width: 16px;
    height: 16px;
    border: 3px solid #f0f0f0;
    border-radius: 50%;
  }

  .cortana input {
    flex: 1;
    padding-left: 5px;
    font-size: 14px;
  }

  .cortana input::placeholder {
    color: #999;
    opacity: 1;
  }

  .pinned,
  .tasks {
    display: flex;
    gap: 1px;
    margin-left: 3px;
  }

  .tasks {
    margin-left: 5px;
  }

  .tasks .run {
    border-bottom: 2px solid #76b9ed;
    padding-top: 2px;
  }

  .tasks .active {
    background: #343f43;
  }

  .cpu {
    width: 60px;
    margin-left: auto;
  }

  .cpu,
  .clock {
    display: flex;
    flex-direction: column;
    justify-content: center;
    text-align: center;
    line-height: 18px;
  }

  .tray {
    display: flex;
    align-items: center;
    gap: 9px;
    padding: 0 15px 0 11px;
  }

  .lang {
    font-size: 14px;
  }

  .clock {
    width: 64px;
  }

  .taskbar .notice {
    width: 54px;
    margin-right: 4px;
    border-right: 1px solid #444;
    background: #000;
  }

  .marks {
    position: absolute;
    left: 0;
    top: 0;
    pointer-events: none;
    z-index: 3;
  }
</style>
